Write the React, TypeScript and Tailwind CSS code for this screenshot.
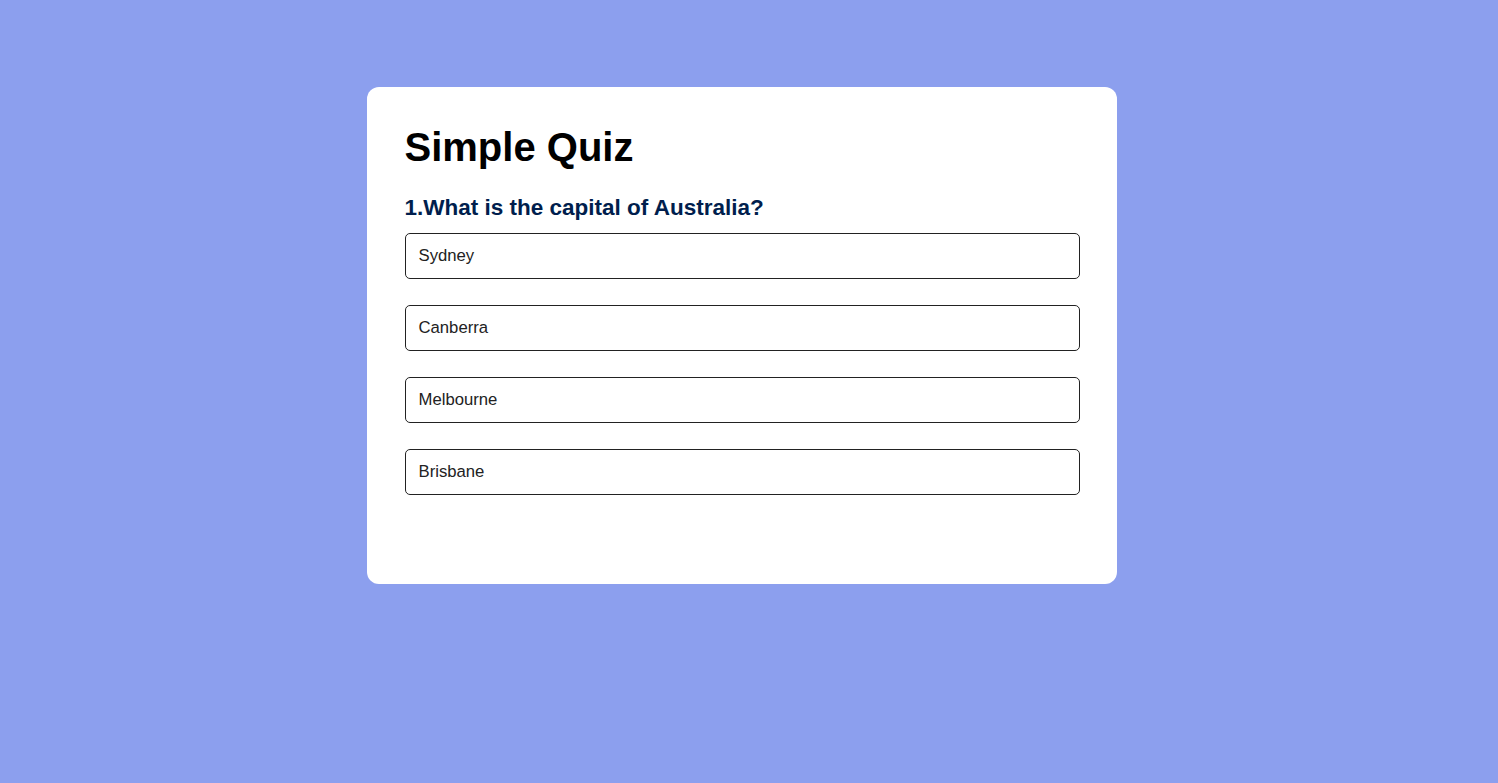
const options = ["Sydney", "Canberra", "Melbourne", "Brisbane"];

const App = () => {
   return (
      <div className="min-h-screen w-full bg-[#8c9fee] pt-[87px] pr-[14px] font-['Liberation_Sans',Arial,sans-serif]">
         <div className="mx-auto w-[750px] rounded-[12px] bg-white px-[37.5px] pt-[37px] pb-[89px]">
            <h1 className="text-[40px] leading-[46px] font-bold text-black">
               Simple Quiz
            </h1>
            <h2 className="mt-[25px] text-[22.5px] leading-[26px] font-bold text-[#001e4d]">
               1.What is the capital of Australia?
            </h2>
            <div className="mt-[12px] flex flex-col gap-[26px]">
               {options.map((opt) => (
                  <button
                     key={opt}
                     className="flex h-[46px] w-full items-center rounded-[5px] border border-[#222] bg-white px-[13px] text-left text-[16.7px] text-[#222]"
                  >
                     {opt}
                  </button>
               ))}
            </div>
         </div>
      </div>
   );
};

export default App;
